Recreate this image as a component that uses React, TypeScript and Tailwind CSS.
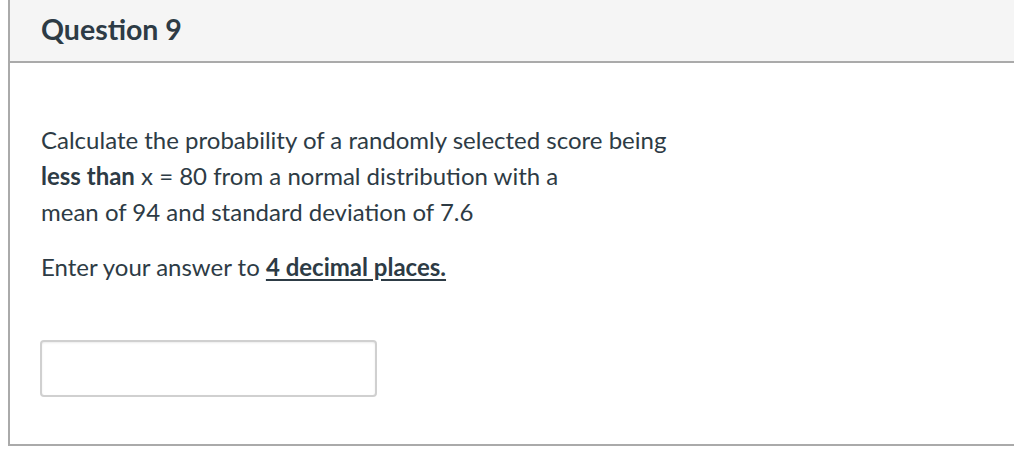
export default function App() {
  return (
    <div className="w-[1014px] h-[456px] overflow-hidden bg-white font-['Lato',sans-serif] text-[#2d3b45]">
      <div className="ml-[8px] w-[1020px] border-l-2 border-b-2 border-[#aaaaaa]">
        <div className="h-[63px] bg-[#f5f5f5] border-b-2 border-[#aaaaaa] pl-[31px] flex items-center">
          <h2 className="text-[28.5px] font-bold leading-none pb-[2px]">Question 9</h2>
        </div>
        <div className="pl-[31px] pt-[59px] pb-[47px]">
          <div className="text-[24px] leading-[36px] whitespace-nowrap">
            <p>
              Calculate the probability of a randomly selected score being
              <br />
              <strong className="font-bold">less than</strong> x = 80 from a normal distribution with a
              <br />
              mean of 94 and standard deviation of 7.6
            </p>
            <p className="mt-[19px]">
              Enter your answer to{' '}
              <span className="font-bold underline underline-offset-[3px]">4 decimal places.</span>
            </p>
          </div>
          <input
            type="text"
            className="mt-[55px] -ml-[1px] block w-[337px] h-[57px] rounded-[4px] border-2 border-[#d0d0d0] bg-white shadow-[inset_0_1px_2px_rgba(0,0,0,0.08)] outline-none"
          />
        </div>
      </div>
    </div>
  );
}
